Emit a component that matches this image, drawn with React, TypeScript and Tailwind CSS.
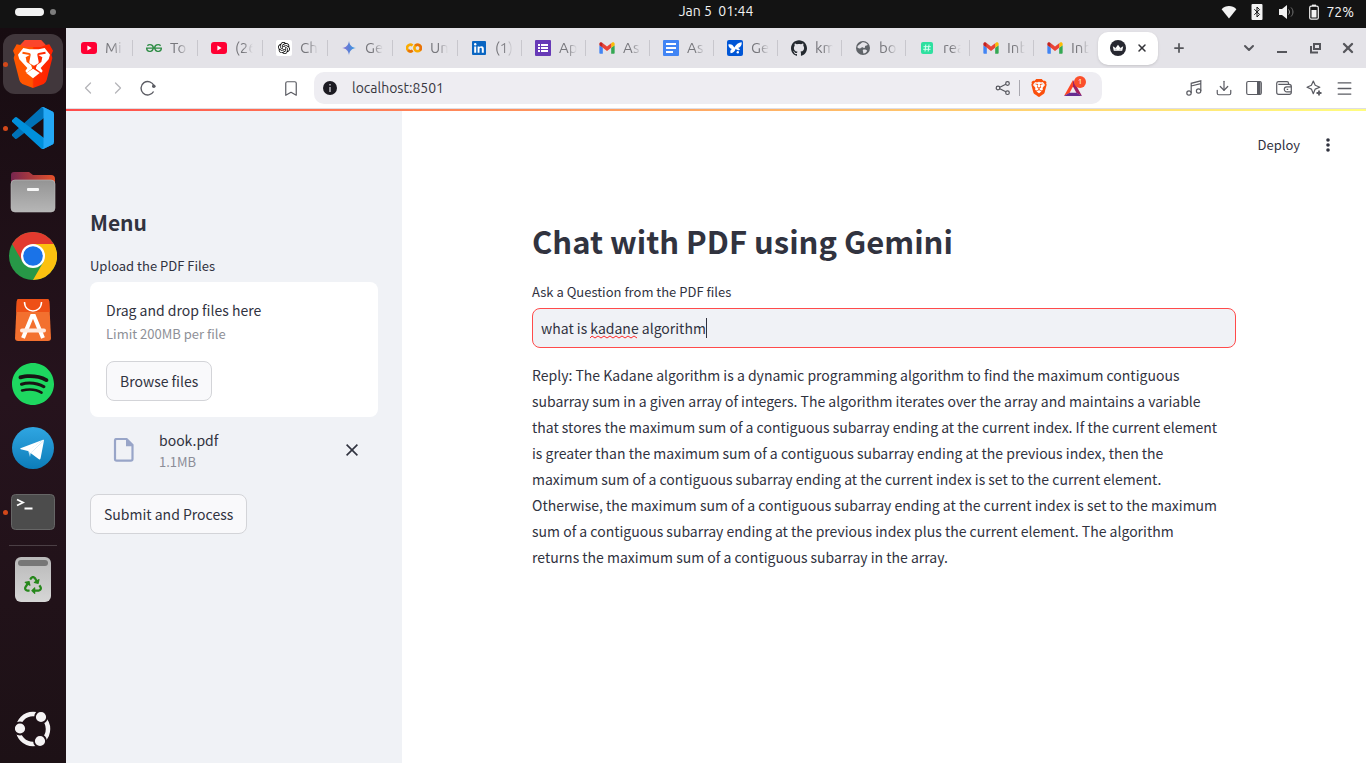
import { useState } from 'react';
import type { ReactNode } from 'react';
import {
  Bookmark,
  ChevronDown,
  ChevronLeft,
  ChevronRight,
  Download,
  Menu as MenuIcon,
  Plus,
  X,
} from 'lucide-react';
import {
  SiBrave,
  SiGeeksforgeeks,
  SiGithub,
  SiOpenai,
  SiSpotify,
} from 'react-icons/si';
import { FaRecycle } from 'react-icons/fa';

const uiFont = 'font-["Ubuntu","Noto_Sans",sans-serif]';
const appFont = 'font-["Noto_Sans_CJK_SC",sans-serif]';

function Youtube() {
  return (
    <svg viewBox="0 0 16 16" className="size-4">
      <rect y="2" width="16" height="12" rx="3" fill="#ff0033" />
      <path d="M6.4 5.6 10.6 8 6.4 10.4z" fill="#fff" />
    </svg>
  );
}

function Gmail() {
  return (
    <svg viewBox="50 39 92 72" className="size-4">
      <path fill="#4285f4" d="M58 108h14V74L52 59v43c0 3.32 2.69 6 6 6" />
      <path fill="#34a853" d="M120 108h14c3.32 0 6-2.69 6-6V59l-20 15" />
      <path fill="#fbbc04" d="M120 48v26l20-15v-8c0-7.42-8.47-11.65-14.4-7.2" />
      <path fill="#ea4335" d="M72 74V48l24 18 24-18v26L96 92" />
      <path fill="#c5221f" d="M52 51v8l20 15V48l-5.6-4.2c-5.94-4.45-14.4-.22-14.4 7.2" />
    </svg>
  );
}

function Gemini() {
  return (
    <svg viewBox="0 0 16 16" className="size-4">
      <defs>
        <linearGradient id="gem" x1="0" x2="1">
          <stop offset="0" stopColor="#8e75d8" />
          <stop offset="0.5" stopColor="#5a7fd6" />
          <stop offset="1" stopColor="#35a4e8" />
        </linearGradient>
      </defs>
      <path d="M8 1c.6 4.2 2.800 6.400 7 7-4.200.6-6.400 2.800-7 7-.6-4.200-2.800-6.400-7-7 4.200-.6 6.400-2.800 7-7z" fill="url(#gem)" />
    </svg>
  );
}

function Colab() {
  return (
    <svg viewBox="0 0 16 16" className="size-4" fill="none" strokeWidth="2.600">
      <circle cx="11.600" cy="8" r="3.200" stroke="#f9ab00" />
      <path d="M9.300 5.700a3.200 3.200 0 0 1 4.600 4.600" stroke="#e8710a" />
      <path d="M6.600 5.500a3.300 3.300 0 1 0 0 5" stroke="#f9ab00" />
      <path d="M2.200 10.200a3.300 3.300 0 0 0 4.400.3" stroke="#e8710a" />
    </svg>
  );
}

function Linkedin() {
  return (
    <svg viewBox="0 0 16 16" className="size-4">
      <rect x="1" y="1" width="14" height="14" rx="1" fill="#0a66c2" />
      <path d="M3.200 6.400h2v6.400h-2zM6.600 6.400h1.900v.9c.4-.7 1.100-1.100 2-1.100 1.900 0 2.300 1.200 2.300 2.900v3.700h-2V9.500c0-.8 0-1.700-1.100-1.700s-1.200.8-1.200 1.700v3.300H6.600z" fill="#fff" />
      <circle cx="4.200" cy="4.300" r="1.200" fill="#fff" />
    </svg>
  );
}

function Forms() {
  return (
    <svg viewBox="0 0 16 16" className="size-4">
      <rect width="16" height="16" rx="1" fill="#673ab7" />
      <path d="M3 4h2v2H3zM3 7h2v2H3zM3 10h2v2H3zM6 4h7v2H6zM6 7h7v2H6zM6 10h7v2H6z" fill="#fff" />
    </svg>
  );
}

function Docs() {
  return (
    <svg viewBox="0 0 16 16" className="size-4">
      <rect width="16" height="16" rx="1" fill="#4285f4" />
      <path d="M3 3h10v2H3zM3 7h10v2H3zM3 11h7v2H3z" fill="#fff" />
    </svg>
  );
}

function Butterfly() {
  return (
    <svg viewBox="0 0 16 16" className="size-4">
      <rect width="16" height="16" rx="2" fill="#0056d6" />
      <path d="M1.300 4.500C3.500 3.600 6 4.500 7.300 7.600 9 4.500 11.500 2.500 14.700 2.300c.3 2.700-.9 4.900-3.700 5.800 1 .3 1.700 1 1.900 2-1.700.3-3.200-.2-4.200-1.400-.7 2.500-2.300 4.300-5 4.500-.9-1.600-.3-3.200 1.200-4.100C3 8.400 1.500 6.900 1.300 4.500z" fill="#fff" />
      <circle cx="10.800" cy="12.300" r="1.200" fill="#fff" />
    </svg>
  );
}

function Globe() {
  return (
    <svg viewBox="0 0 16 16" className="size-4">
      <circle cx="8" cy="8" r="7" fill="#5f6368" />
      <path d="M7 2.500c2.500-.6 4.600.5 5.800 2.200-.7 1-1.700.5-2.500 1.200-.7.700.3 1.600-1 2-1 .3-1.400-.7-2.500-.5-1.200.2-1 1.200-2.300 1.100-1.100-.2-2-.7-2.200-1.500C2.800 4.800 5 4.600 7 2.500zM8.500 9.500c1.500-.2 3 .3 3.700 1.200-.6 1.500-2 2.600-3.700 2.800-.6-1-.1-1.500-.6-2.300-.4-.6.100-1.500.6-1.700z" fill="#e4e3e8" />
    </svg>
  );
}

function HashTile() {
  return (
    <svg viewBox="0 0 16 16" className="size-4">
      <rect x="2" y="2" width="12" height="12" rx="2" fill="#2fe0a0" />
      <path d="M6.800 4.500 6 11.500M10 4.500l-.8 7M4.500 6.700h7.300M4.200 9.300h7.300" stroke="#d7fff0" />
    </svg>
  );
}

function Crown() {
  return (
    <svg viewBox="0 0 16 16" className="size-4">
      <circle cx="8" cy="8" r="8" fill="#262730" />
      <path d="M2.800 6.200 5.600 8 8 4.800 10.400 8l2.800-1.800-1 4.600H3.800z" fill="#fff" />
      <path d="M5.600 8 8 10.800H3.800zM10.400 8 8 10.800h4.200z" fill="#d5d5d8" />
    </svg>
  );
}

const tabs: { title: string; icon: ReactNode }[] = [
  { title: 'Mi', icon: <Youtube /> },
  { title: 'To', icon: <SiGeeksforgeeks className="size-4 text-[#2f8d46]" /> },
  { title: '(26', icon: <Youtube /> },
  {
    title: 'Ch',
    icon: (
      <span className="grid size-4 place-items-center rounded-xs bg-white">
        <SiOpenai className="size-3 text-black" />
      </span>
    ),
  },
  { title: 'Ge', icon: <Gemini /> },
  { title: 'Un', icon: <Colab /> },
  { title: '(1)', icon: <Linkedin /> },
  { title: 'Ap', icon: <Forms /> },
  { title: 'As', icon: <Gmail /> },
  { title: 'As', icon: <Docs /> },
  { title: 'Ge', icon: <Butterfly /> },
  { title: 'km', icon: <SiGithub className="size-4 text-[#24292f]" /> },
  { title: 'bo', icon: <Globe /> },
  { title: 'rea', icon: <HashTile /> },
  { title: 'Inb', icon: <Gmail /> },
  { title: 'Inb', icon: <Gmail /> },
];

function BraveLogo({ className }: { className: string }) {
  return (
    <span className={`relative grid place-items-center ${className}`}>
      <svg viewBox="0 0 24 24" className="absolute size-full">
        <path d="M6 5h12l-1 9-5 5-5-5z" fill="#fff" />
      </svg>
      <SiBrave className="relative size-full" />
    </span>
  );
}

function TopBar() {
  return (
    <header className="grid h-7 grid-cols-[66px_1fr_auto_1fr] items-start bg-[#131313] text-sm text-[#f2f2f2]">
      <div className="flex h-6 items-center gap-1.5 pl-[15px]">
        <span className="h-2 w-[29px] rounded-full bg-[#f2f2f2]" />
        <span className="size-1.5 rounded-full bg-[#7d7d7d]" />
      </div>
      <span className="col-start-3 whitespace-pre leading-[23px]">Jan 5  01:44</span>
      <div className="flex h-6 items-center justify-end pr-3">
        <svg viewBox="0 0 16 16" className="size-4">
          <path d="M8 14.500.6 5.300C4.600 1 11.400 1 15.400 5.300z" fill="#f2f2f2" />
        </svg>
        <svg viewBox="0 0 12 16" className="ml-3.5 h-4 w-3">
          <rect x=".5" width="11" height="16" rx="1" fill="#f2f2f2" />
          <path d="m3.300 5.200 5.200 5.200L6 13V3l2.500 2.600-5.200 5.200" fill="none" stroke="#131313" />
        </svg>
        <svg viewBox="0 0 16 16" className="ml-4 size-4" fill="none">
          <path d="M0 5h3l5-4v14l-5-4H0z" fill="#f2f2f2" />
          <path d="M9.500 5.500c1.300 1.500 1.300 3.500 0 5" stroke="#a0a0a0" />
          <path d="M12 3.500c2.600 2.600 2.600 6.400 0 9" stroke="#777" />
        </svg>
        <svg viewBox="0 0 10 16" className="ml-3.5 h-4 w-2.5" fill="none">
          <path d="M3 2V.6h4V2" fill="#f2f2f2" />
          <rect x=".7" y="2.200" width="8.600" height="13" rx="1.500" stroke="#f2f2f2" strokeWidth="1.200" />
          <path d="M2.500 6h5v7.500h-5z" fill="#f2f2f2" />
        </svg>
        <span className="ml-[7px] leading-6">72%</span>
      </div>
    </header>
  );
}

function DockItem({ label, running, active, children }: { label: string; running?: boolean; active?: boolean; children: ReactNode }) {
  return (
    <button type="button" aria-label={label} className="relative grid h-16 w-full shrink-0 place-items-center">
      {running && <span className="absolute left-[3px] z-10 size-[5px] rounded-full bg-[#d3481a]" />}
      <span className={active ? 'grid size-[60px] place-items-center rounded-xl bg-[#41373c]' : 'grid size-[60px] place-items-center'}>
        {children}
      </span>
    </button>
  );
}

function Dock() {
  return (
    <nav aria-label="Dock" className="flex w-[66px] shrink-0 flex-col bg-linear-to-b from-[#170c11] via-[#26131d] to-[#1d1116] pt-1 pb-0.5">
      <DockItem label="Brave" running active>
        <svg viewBox="0 0 120 144" className="h-12 w-10">
          <defs>
            <linearGradient id="brave" x1="0" x2="1">
              <stop offset=".48" stopColor="#ff5500" />
              <stop offset=".52" stopColor="#ff2e00" />
              <stop offset="1" stopColor="#ff2000" />
            </linearGradient>
          </defs>
          <path d="M36 0 22 15 11 13 0 32l5 12-3 10 17 66q2 8 9 12l32 12 32-12q7-4 9-12l17-66-3-10 5-12-11-19-11 2L84 0z" fill="url(#brave)" />
          <path d="M36 0 22 15l14 6h48l14-6L84 0z" fill="#fb452b" />
          <path d="M31 24 15 44l4 14 24 26-6 9 4 5 14-10q3-2 2-5l-3-8-13-9-3-14 12-7-22-4 1-6 20 4q5 1 4 6l-4 20q-1 4 3 6l11 6 11-6q4-2 3-6l-4-20q-1-5 4-6l20-4 1 6-22 4 12 7-3 14-13 9-3 8q-1 3 2 5l14 10 4-5-6-9 24-26 4-14-16-20-18 4H49z" fill="#fff" />
          <path d="m60 86 20 13-20 16-20-16z" fill="#fff" />
        </svg>
      </DockItem>
      <DockItem label="Visual Studio Code" running>
        <svg viewBox="0 0 100 100" className="size-[42px]">
          <path fill="#0072b8" d="M96.460 10.800 75.860.88a6.230 6.230 0 0 0-7.110 1.200L1.300 63.580a4.170 4.170 0 0 0 0 6.170l5.510 5a4.170 4.170 0 0 0 5.320.24L93.360 13.370A4.140 4.140 0 0 1 100 16.670v-.24a6.250 6.250 0 0 0-3.540-5.630z" />
          <path fill="#0090dc" d="m96.460 89.200-20.600 9.920a6.230 6.230 0 0 1-7.110-1.200L1.300 36.420a4.170 4.170 0 0 1 0-6.170l5.510-5a4.170 4.170 0 0 1 5.320-.24l81.230 61.620A4.140 4.140 0 0 0 100 83.330v.24a6.250 6.250 0 0 1-3.540 5.630z" />
          <path fill="#24a8f5" d="M75.860 99.130a6.230 6.230 0 0 1-7.110-1.210c2.310 2.300 6.250.67 6.250-2.590V4.670c0-3.260-3.940-4.890-6.250-2.590A6.230 6.230 0 0 1 75.860.87l20.600 9.910A6.250 6.250 0 0 1 100 16.410v67.180a6.250 6.250 0 0 1-3.540 5.630z" />
        </svg>
      </DockItem>
      <DockItem label="Files">
        <svg viewBox="0 0 46 42" className="h-[42px] w-[46px]">
          <defs>
            <linearGradient id="folderBack" x1="0" x2="1">
              <stop offset="0" stopColor="#77264f" />
              <stop offset="1" stopColor="#e5512a" />
            </linearGradient>
            <linearGradient id="folderFront" x1="0" x2="0" y1="0" y2="1">
              <stop offset="0" stopColor="#949494" />
              <stop offset="1" stopColor="#b6b6b6" />
            </linearGradient>
          </defs>
          <path d="M1 20V4q0-3 3-3h15l4 3h18q4 0 4 4v12z" fill="url(#folderBack)" />
          <rect x="1" y="9" width="44" height="32" rx="4" fill="url(#folderFront)" stroke="#bdbdbd" strokeWidth=".6" />
          <rect x="17" y="17" width="12" height="3" rx="1" fill="#f7f7f7" />
        </svg>
      </DockItem>
      <DockItem label="Chrome">
        <svg viewBox="0 0 48 48" className="size-12">
          <circle cx="24" cy="24" r="24" fill="#279847" />
          <path d="M24 12h20.800A24 24 0 0 1 24 48l10.400-18z" fill="#fcc110" />
          <path d="M3.200 12A24 24 0 0 1 44.800 12H24L13.600 30z" fill="#e23a2e" />
          <circle cx="24" cy="24" r="12" fill="#fff" />
          <circle cx="24" cy="24" r="9.800" fill="#1a73e8" />
        </svg>
      </DockItem>
      <DockItem label="App Center">
        <svg viewBox="0 0 36 42" className="h-[42px] w-9">
          <path d="M4 0h28q2 0 2.200 2L36 39q0 3-3 3H3q-3 0-3-3L1.800 2Q2 0 4 0z" fill="#f3702f" />
          <path d="M4 0h28q2 0 2.200 2l.6 11H1.200l.6-11Q2 0 4 0z" fill="#ee5016" />
          <path d="M9.500 3c0 12 17 12 17 0" fill="none" stroke="#fff" strokeWidth="1.500" />
          <path d="M8 39 17 17h2l9 22" fill="none" stroke="#fff" strokeWidth="4" />
          <path d="M7 31.500h22" stroke="#ffe9df" strokeWidth="4" strokeLinecap="round" />
        </svg>
      </DockItem>
      <DockItem label="Spotify">
        <span className="grid size-[42px] place-items-center rounded-full bg-[#191414]">
          <SiSpotify className="size-[42px] text-[#1ed760]" />
        </span>
      </DockItem>
      <DockItem label="Telegram">
        <span className="grid size-[42px] place-items-center rounded-full bg-linear-to-b from-[#2fa6e2] to-[#0b7db9]">
          <svg viewBox="0 0 42 42" className="size-full">
            <path d="m16 23.500 12.500-8.800L19 25l-1 5z" fill="#b9dcf0" />
            <path d="M8.500 21.300 31 12.700 16 23.900l-7.300-1.700q-.8-.4-.2-.9zM32 13.500l-3.400 17.700c-.3 1.300-1.200 1.500-2 .9L18.500 26z" fill="#fff" />
            <path d="M31 12.700q1.200-.3 1 .9L18.500 26.200 16 23.500z" fill="#fff" />
          </svg>
        </span>
      </DockItem>
      <DockItem label="Terminal" running>
        <svg viewBox="0 0 44 36" className="h-9 w-11">
          <rect x=".5" y=".5" width="43" height="35" rx="4" fill="#4c4c4c" stroke="#666" />
          <path d="m6 5.500 6 3-6 3M13.500 14.500h8" fill="none" stroke="#fff" strokeWidth="1.800" />
        </svg>
      </DockItem>
      <hr className="mx-[9px] mt-px mb-px border-[#4b3f45]" />
      <DockItem label="Trash">
        <span className="flex h-[45px] w-9 flex-col items-center rounded-md bg-linear-to-b from-[#b9b9b9] to-[#d6d6d6] pt-[3px]">
          <span className="h-1.5 w-[30px] rounded-[3px] bg-[#777]" />
          <FaRecycle className="mt-2.5 size-[18px] text-[#26871b]" />
        </span>
      </DockItem>
      <div className="mt-auto">
        <DockItem label="Show Apps">
          <svg viewBox="0 0 36 36" className="size-9" fill="none">
            <circle cx="18" cy="18" r="15" stroke="#f5f3f4" strokeWidth="4.500" />
            <g fill="#f5f3f4" stroke="#1f1218" strokeWidth="1.800">
              <circle cx="5" cy="17.500" r="6" />
              <circle cx="26" cy="6" r="6" />
              <circle cx="25" cy="30" r="6" />
            </g>
          </svg>
        </DockItem>
      </div>
    </nav>
  );
}

function TabStrip() {
  return (
    <div className="flex h-10 items-center bg-[#e4e3e8] pl-0.5 text-[15px] text-[#77777c]">
      <div role="tablist" className="flex h-full min-w-0 items-center">
        {tabs.map((tab, i) => (
          <button
            key={i}
            type="button"
            role="tab"
            className={`relative flex h-full min-w-0 items-center gap-2 pl-[13px] after:absolute after:right-0 after:h-4 after:w-px after:bg-[#c8c7cd] last:after:hidden ${i < 6 ? 'w-[65px]' : 'w-16'}`}
          >
            <span className="shrink-0">{tab.icon}</span>
            <span className="w-[18px] overflow-hidden whitespace-nowrap text-left mask-r-from-45% mask-r-to-100%">{tab.title}</span>
          </button>
        ))}
      </div>
      <div className="flex h-[33px] w-[60px] shrink-0 items-center justify-between rounded-[10px] bg-white pr-2.5 pl-3 shadow-sm">
        <Crown />
        <button type="button" aria-label="Close tab">
          <X className="size-3 text-[#333338]" strokeWidth={3} />
        </button>
      </div>
      <button type="button" aria-label="New tab" className="ml-3.5">
        <Plus className="size-3.5 text-[#55565b]" strokeWidth={3} />
      </button>
      <div className="ml-auto flex items-center gap-[17px] pr-2.5 text-[#55565b]">
        <button type="button" aria-label="Search tabs">
          <ChevronDown className="size-4" strokeWidth={3} />
        </button>
        <button type="button" aria-label="Minimize">
          <svg viewBox="0 0 16 16" className="size-4">
            <path d="M3 11h10v2H3z" fill="currentColor" />
          </svg>
        </button>
        <button type="button" aria-label="Restore">
          <svg viewBox="0 0 16 16" className="size-4" fill="none" stroke="currentColor" strokeWidth="2">
            <path d="M7 4h6v5H7zM4 6v6.500h7" />
          </svg>
        </button>
        <button type="button" aria-label="Close window">
          <X className="size-4" strokeWidth={3.500} />
        </button>
      </div>
    </div>
  );
}

function ToolButton({ label, children }: { label: string; children: ReactNode }) {
  return (
    <button type="button" aria-label={label} className="grid h-8 w-[30px] place-items-center">
      {children}
    </button>
  );
}

function Toolbar() {
  const [url, setUrl] = useState('localhost:8501');
  return (
    <div className="flex h-10 items-center bg-white px-[7px] text-[#5b5c63]">
      <div className="flex text-[#b5b5b9]">
        <ToolButton label="Back">
          <ChevronLeft className="size-5" strokeWidth={1.500} />
        </ToolButton>
        <ToolButton label="Forward">
          <ChevronRight className="size-5" strokeWidth={1.500} />
        </ToolButton>
        <ToolButton label="Reload">
          <svg viewBox="0 0 16 16" className="size-4 text-[#5b5c63]" fill="none" stroke="currentColor">
            <path d="M13.600 11.500A6.700 6.700 0 1 1 14 5.800" strokeWidth="1.400" />
            <circle cx="13.800" cy="6.200" r="1.800" fill="currentColor" stroke="none" />
          </svg>
        </ToolButton>
      </div>
      <div className="ml-[113px]">
        <ToolButton label="Bookmark">
          <Bookmark className="h-[19px] w-[18px]" strokeWidth={1.600} />
        </ToolButton>
      </div>
      <div className="ml-2 flex h-8 flex-1 items-center rounded-[10px] bg-[#eeedf2] pr-5 pl-2">
        <svg viewBox="0 0 16 16" className="size-4">
          <circle cx="8" cy="8" r="7" fill="#1c1b22" />
          <path d="M8 4v1.600M8 7v5" stroke="#b9b9c0" strokeWidth="1.500" />
        </svg>
        <input
          aria-label="Address"
          value={url}
          onChange={(e) => setUrl(e.target.value)}
          className="ml-3.5 min-w-0 flex-1 bg-transparent text-sm text-[#38373f] outline-none"
        />
        <button type="button" aria-label="Share">
          <svg viewBox="0 0 16 16" className="size-4" fill="none" stroke="#55565d" strokeWidth="1.200">
            <circle cx="3" cy="8" r="1.800" />
            <circle cx="12.500" cy="3.500" r="1.800" />
            <circle cx="12.500" cy="12.700" r="1.800" />
            <path d="m4.800 7.200 6-2.900M4.800 8.800l6 3" />
          </svg>
        </button>
        <span className="ml-2 h-4 w-px bg-[#a9a8b0]" />
        <button type="button" aria-label="Brave Shields" className="ml-2.5">
          <BraveLogo className="size-[18px] text-[#fb4f0c]" />
        </button>
        <button type="button" aria-label="Brave Rewards" className="relative ml-4">
          <svg viewBox="0 0 18 16" className="h-4 w-[18px]">
            <path d="M9 0 0 16l5.500-3L9 6.500z" fill="#ff4724" />
            <path d="m9 0 9 16-5.500-3L9 6.500z" fill="#9e1f63" />
            <path d="M0 16h18l-5.500-3.200h-7z" fill="#662d91" />
          </svg>
          <span className="absolute -top-1 left-2.5 grid size-3 place-items-center rounded-full bg-[#fb4f2b] text-[8px] leading-3 text-white">1</span>
        </button>
      </div>
      <div className="ml-[77px] flex">
        <ToolButton label="Playlist">
          <svg viewBox="0 0 16 16" className="size-4" fill="none" stroke="currentColor" strokeWidth="1.200">
            <circle cx="3" cy="13" r="2.200" />
            <circle cx="12.600" cy="11" r="2.200" />
            <path d="M5.200 13V3.300l9.600-2.500V11M5.200 6l9.600-2.300" />
          </svg>
        </ToolButton>
        <ToolButton label="Downloads">
          <Download className="size-[18px]" strokeWidth={1.600} />
        </ToolButton>
        <ToolButton label="Side panel">
          <svg viewBox="0 0 16 16" className="size-4">
            <rect x=".7" y="1.500" width="14.600" height="13" rx="1.500" fill="none" stroke="currentColor" strokeWidth="1.200" />
            <path d="M11 1.500h3.500v13H11z" fill="currentColor" />
          </svg>
        </ToolButton>
        <ToolButton label="Wallet">
          <svg viewBox="0 0 16 16" className="size-4" fill="none" stroke="currentColor" strokeWidth="1.200">
            <path d="M12.500 4.300V3.200q0-1.600-1.500-1.600H2.600A1.900 1.900 0 0 0 .7 3.400v8.800q0 2.100 2 2.100h10.500q2.100 0 2.100-2.100V6.400q0-2.100-2.100-2.100H2.300" />
            <path d="M15.300 6.800h-4.500a2.500 2.500 0 0 0 0 5h4.500M10.700 9.300h1.500" />
          </svg>
        </ToolButton>
        <ToolButton label="Leo AI">
          <svg viewBox="0 0 16 16" className="size-4" fill="none" stroke="currentColor" strokeWidth="1.200">
            <path d="M7.300 1 9.200 5.300l4.600 1.900-4.600 1.900-1.900 4.600-1.900-4.600L1 7.200l4.400-1.900z" strokeLinejoin="round" />
            <path d="M13 10.500v5M10.500 13h5" strokeWidth="1.800" />
          </svg>
        </ToolButton>
        <ToolButton label="Menu">
          <MenuIcon className="size-[19px]" strokeWidth={1.600} />
        </ToolButton>
      </div>
    </div>
  );
}

const buttonClass =
  'h-10 rounded-lg border border-[#d3d4d8] bg-[#f9f9fb] px-[13px] text-sm leading-[26px] text-[#31333f]';

function Sidebar() {
  return (
    <aside className="w-[336px] shrink-0 bg-[#f0f2f6] px-6 pt-[97px]">
      <h2 className="text-[21px] leading-7 font-semibold">Menu</h2>
      <label htmlFor="pdf-upload" className="mt-5 block text-[13px] leading-5">
        Upload the PDF Files
      </label>
      <section className="mt-1.5 rounded-lg bg-white p-4">
        <p className="text-sm leading-6">Drag and drop files here</p>
        <p className="mt-0.5 text-[13px] leading-5 text-[#8e9097]">Limit 200MB per file</p>
        <button id="pdf-upload" type="button" className={`mt-[17px] ${buttonClass}`}>
          Browse files
        </button>
      </section>
      <div className="mt-[11px] flex items-center pr-4 pl-[22px]">
        <svg viewBox="0 0 24 24" className="size-6" fill="none">
          <path d="M4.500 1h10L20.500 7v14q0 1.700-1.700 1.700H4.700Q3 22.700 3 21V2.500Q3 1 4.500 1z" stroke="#98a5c8" strokeWidth="2.200" />
          <path d="M14 1v7.300h7z" fill="#98a5c8" />
        </svg>
        <div className="ml-[23px] flex-1">
          <p className="text-sm leading-6">book.pdf</p>
          <p className="text-[13px] leading-5 text-[#8b8d97]">1.1MB</p>
        </div>
        <button type="button" aria-label="Remove book.pdf" className="grid size-5 place-items-center">
          <svg viewBox="0 0 12 12" className="size-3" stroke="#31333f" strokeWidth="1.600">
            <path d="m.6.6 10.800 10.800M11.400.6.600 11.400" />
          </svg>
        </button>
      </div>
      <button type="button" className={`mt-[22px] ${buttonClass}`}>
        Submit and Process
      </button>
    </aside>
  );
}

const replyLines = [
  'Reply: The Kadane algorithm is a dynamic programming algorithm to find the maximum contiguous',
  'subarray sum in a given array of integers. The algorithm iterates over the array and maintains a variable',
  'that stores the maximum sum of a contiguous subarray ending at the current index. If the current element',
  'is greater than the maximum sum of a contiguous subarray ending at the previous index, then the',
  'maximum sum of a contiguous subarray ending at the current index is set to the current element.',
  'Otherwise, the maximum sum of a contiguous subarray ending at the current index is set to the maximum',
  'sum of a contiguous subarray ending at the previous index plus the current element. The algorithm',
  'returns the maximum sum of a contiguous subarray in the array.',
];

function Chat() {
  const [question, setQuestion] = useState('what is kadane algorithm');
  return (
    <main className="flex-1 bg-white">
      <div className="flex h-[52px] items-center justify-end pt-4 pr-[30px]">
        <button type="button" className="text-[13px] leading-5">
          Deploy
        </button>
        <button type="button" aria-label="Main menu" className="ml-5 grid size-4 place-items-center">
          <svg viewBox="0 0 4 16" className="h-4 w-1" fill="#31333f">
            <circle cx="2" cy="3" r="1.800" />
            <circle cx="2" cy="8" r="1.800" />
            <circle cx="2" cy="13" r="1.800" />
          </svg>
        </button>
      </div>
      <div className="mx-auto mt-[54px] w-full max-w-[704px]">
        <h1 className="text-[31px] leading-[48px] font-semibold">Chat with PDF using Gemini</h1>
        <label htmlFor="question" className="mt-[17px] block text-[13px] leading-5">
          Ask a Question from the PDF files
        </label>
        <div className="relative mt-1.5">
          <input
            id="question"
            value={question}
            spellCheck={false}
            onChange={(e) => setQuestion(e.target.value)}
            className="h-10 w-full rounded-lg border border-[#ff4b4b] bg-[#f0f2f6] px-2 text-sm outline-none"
          />
          <svg viewBox="0 0 48 4" className="pointer-events-none absolute top-[27px] left-[58px] h-1 w-12" fill="none" stroke="#ff2a2a">
            <path d="M0 3 2 1l3 2 3-2 3 2 3-2 3 2 3-2 3 2 3-2 3 2 3-2 3 2 3-2 3 2 3-2 3 2" />
          </svg>
          <span className="pointer-events-none absolute top-2.5 left-[174px] h-5 w-px bg-[#31333f]" />
        </div>
        <p className="mt-3.5 text-sm leading-[26px]">
          {replyLines.map((line) => (
            <span key={line} className="block">
              {line}
            </span>
          ))}
        </p>
      </div>
    </main>
  );
}

export default function App() {
  return (
    <div className={`flex min-h-screen flex-col ${uiFont}`}>
      <TopBar />
      <div className="flex flex-1">
        <Dock />
        <div className="flex min-w-0 flex-1 flex-col">
          <TabStrip />
          <Toolbar />
          <div className="h-px bg-[#dedde4]" />
          <div className="h-0.5 bg-linear-to-r from-[#ff4b4b] to-[#fffd80]" />
          <div className={`flex flex-1 text-[#31333f] ${appFont}`}>
            <Sidebar />
            <Chat />
          </div>
        </div>
      </div>
    </div>
  );
}
